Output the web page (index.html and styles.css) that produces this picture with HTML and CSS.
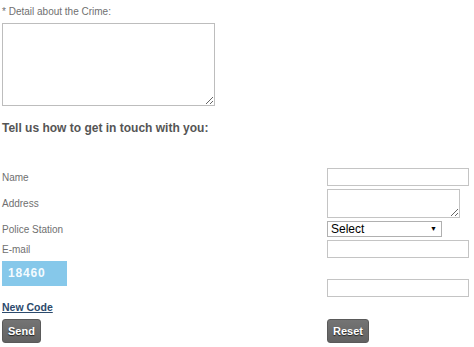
FILE: index.html
```html
<!DOCTYPE html>
<html lang="en">
<head>
    <meta charset="UTF-8">
    <title>Report a Crime</title>
    <link rel="stylesheet" href="styles.css">
</head>
<body>
    <form class="crime-form">
        <label class="field-label" for="detail">* Detail about the Crime:</label>
        <textarea id="detail" class="detail-box"></textarea>

        <h3 class="section-title">Tell us how to get in touch with you:</h3>

        <div class="contact">
            <div class="row">
                <label for="name">Name</label>
                <input type="text" id="name" class="text-input">
            </div>
            <div class="row">
                <label for="address">Address</label>
                <textarea id="address" class="address-box"></textarea>
            </div>
            <div class="row">
                <label for="station">Police Station</label>
                <span class="select-wrap">
                    <select id="station">
                        <option>Select</option>
                    </select>
                </span>
            </div>
            <div class="row">
                <label for="email">E-mail</label>
                <input type="text" id="email" class="text-input">
            </div>
            <div class="row captcha-row">
                <div class="captcha">18460</div>
                <input type="text" class="text-input">
            </div>
            <div class="row code-row">
                <a href="#" class="new-code">New Code</a>
            </div>
            <div class="row button-row">
                <div><button type="button" class="btn">Send</button></div>
                <div><button type="reset" class="btn">Reset</button></div>
            </div>
        </div>
    </form>
</body>
</html>
```

FILE: styles.css
```css
body {
    margin: 0;
    background-color: #fff;
    font-family: "Liberation Sans", Arial, sans-serif;
}
.crime-form {
    padding: 5px 2px 0;
}
.field-label {
    display: block;
    font-size: 10px;
    line-height: 13px;
    color: #707070;
    margin-bottom: 5px;
}
.detail-box {
    display: block;
    box-sizing: border-box;
    width: 213px;
    height: 83px;
    margin: 0;
    border: 1px solid #bdbdbd;
}
.section-title {
    margin: 15px 0 0;
    font-size: 12px;
    line-height: 15px;
    font-weight: bold;
    color: #555;
}
.contact {
    display: flex;
    flex-direction: column;
    gap: 3px;
    margin-top: 32px;
}
.row {
    display: grid;
    grid-template-columns: 325px 142px;
    align-items: center;
}
.row label {
    font-size: 10px;
    color: #707070;
}
.text-input {
    box-sizing: border-box;
    width: 142px;
    height: 18px;
    margin: 0;
    border: 1px solid #c4c4c4;
}
.address-box {
    box-sizing: border-box;
    width: 133px;
    height: 29px;
    margin: 0;
    border: 1px solid #c4c4c4;
}
.select-wrap {
    position: relative;
    display: block;
    width: 115px;
}
.select-wrap select {
    display: block;
    box-sizing: border-box;
    width: 115px;
    height: 16px;
    margin: 0;
    padding: 0 3px;
    border: 1px solid #b0b0b0;
    background: #fff;
    font-family: "Liberation Sans", Arial, sans-serif;
    font-size: 12px;
    color: #000;
    appearance: none;
    -webkit-appearance: none;
}
.select-wrap::after {
    content: "\25BC";
    position: absolute;
    right: 5px;
    top: 4px;
    font-size: 7px;
    line-height: 8px;
    color: #000;
    pointer-events: none;
}
.captcha-row {
    align-items: end;
}
.captcha {
    width: 65px;
    height: 25px;
    margin-bottom: 11px;
    box-sizing: border-box;
    padding: 5px 0 0 6px;
    background-color: #86c8ea;
    color: #f4fbff;
    font-size: 12px;
    font-weight: bold;
    line-height: 14px;
    letter-spacing: 0.8px;
}
.code-row {
    margin-top: 1px;
}
.new-code {
    font-size: 10.5px;
    line-height: 13px;
    font-weight: bold;
    color: #2c4a6c;
}
.button-row {
    margin-top: 2px;
}
.btn {
    height: 24px;
    padding: 0 5px;
    border: 1px solid #5a5a5a;
    border-radius: 3px;
    background: linear-gradient(#747474, #626262);
    color: #fff;
    font-family: "Liberation Sans", Arial, sans-serif;
    font-size: 11px;
    font-weight: bold;
    text-shadow: 0 1px 1px #222;
    cursor: pointer;
}
```
